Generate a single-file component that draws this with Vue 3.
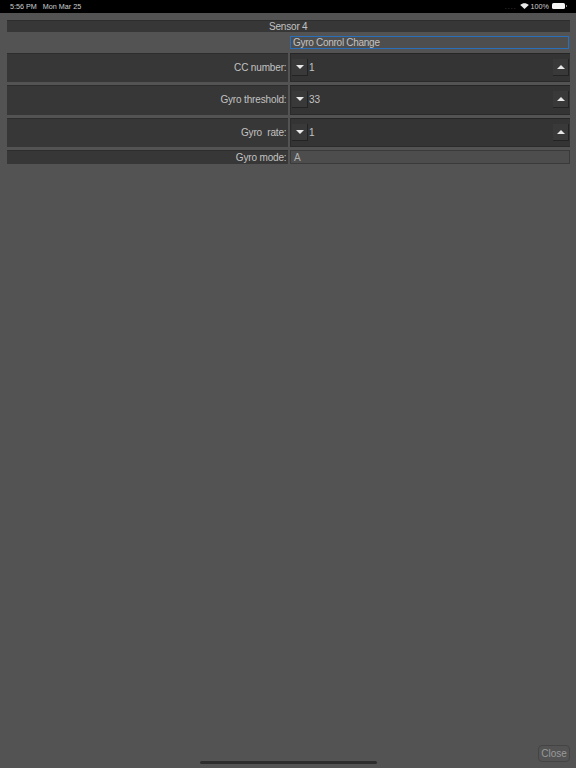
<template>
  <div class="screen">
    <div class="status-bar">
      <span class="clock">5:56 PM</span>
      <span class="date">Mon Mar 25</span>
      <span class="status-right">
        <span class="signal">....</span>
        <svg class="wifi" width="9" height="6" viewBox="0 0 10 7">
          <path d="M5 7 L0 2.4 C3 -0.6 7 -0.6 10 2.4 Z" fill="#e8e8e8" />
        </svg>
        <span class="battery-text">100%</span>
        <span class="battery"></span>
        <span class="battery-tip"></span>
      </span>
    </div>

    <div class="panel">
      <div class="title">Sensor 4</div>

      <div class="name-row">
        <div class="spacer"></div>
        <div class="name-input">Gyro Conrol Change</div>
      </div>

      <div v-for="row in rows" :key="row.label" class="row">
        <div class="label">{{ row.label }}</div>
        <div class="stepper">
          <div class="step-btn down"><span class="arrow-down"></span></div>
          <div class="value">{{ row.value }}</div>
          <div class="step-btn up"><span class="arrow-up"></span></div>
        </div>
      </div>

      <div class="mode-row">
        <div class="label">Gyro mode:</div>
        <div class="mode-value">A</div>
      </div>
    </div>

    <div class="footer">
      <div class="close-btn">Close</div>
    </div>
    <div class="home-bar"></div>
  </div>
</template>

<script setup>
const rows = [
  { label: 'CC number:', value: '1' },
  { label: 'Gyro threshold:', value: '33' },
  { label: 'Gyro\u00a0 rate:', value: '1' }
]
</script>

<style>
html,
body {
  margin: 0;
  background: #535353;
}
</style>

<style scoped>
.screen {
  position: relative;
  display: flex;
  flex-direction: column;
  width: 576px;
  height: 768px;
  overflow: hidden;
  background: #535353;
  font-family: "Liberation Sans", Arial, sans-serif;
  color: #c2c2c2;
}

.status-bar {
  display: flex;
  align-items: center;
  flex: 0 0 13.33px;
  padding: 0 9px 1px 10px;
  box-sizing: border-box;
  background: #000;
  color: #d0d0d0;
  font-family: "Liberation Sans", sans-serif;
  font-size: 7.2px;
}

.date {
  margin-left: 6px;
}

.status-right {
  display: flex;
  align-items: center;
  margin-left: auto;
}

.signal {
  margin-right: 3px;
  color: #555;
  font-size: 7px;
  letter-spacing: 1px;
  line-height: 7px;
}

.wifi {
  margin-right: 2px;
}

.battery {
  display: block;
  width: 13px;
  height: 6px;
  margin-left: 3px;
  border-radius: 1.5px;
  background: #f4f4f4;
}

.battery-tip {
  width: 1px;
  height: 2px;
  margin-left: 1px;
  background: #888;
}

.panel {
  display: flex;
  flex-direction: column;
  padding: 6.67px 6px 0 6.5px;
}

.title {
  box-sizing: border-box;
  height: 12.33px;
  margin-bottom: 3.67px;
  border-top: 1px solid #2d2d2d;
  background: #373737;
  font-size: 10px;
  letter-spacing: -0.2px;
  line-height: 11px;
  text-align: center;
}

.name-row,
.row,
.mode-row {
  display: flex;
  gap: 2.5px;
}

.name-row {
  margin-bottom: 3.67px;
}

.spacer,
.label {
  flex: 0 0 281px;
}

.name-input {
  flex: 1;
  box-sizing: border-box;
  height: 13.33px;
  margin-right: 1px;
  padding-left: 2px;
  border: 1px solid #2a6fba;
  background: #4e4e4e;
  font-size: 10px;
  letter-spacing: -0.28px;
  line-height: 12px;
}

.row {
  height: 29.33px;
  margin-bottom: 3px;
}

.row .label,
.mode-row .label {
  box-sizing: border-box;
  padding-right: 1px;
  background: #373737;
  border-top: 1px solid #2d2d2d;
  font-size: 10px;
  letter-spacing: -0.15px;
  text-align: right;
}

.row .label {
  line-height: 27px;
}

.stepper {
  display: flex;
  flex: 1;
  align-items: center;
  box-sizing: border-box;
  padding: 0 1px 0 1px;
  border-top: 1px solid #262626;
  border-left: 1px solid #2a2a2a;
  border-bottom: 1px solid #2a2a2a;
  background: #343434;
}

.value {
  flex: 1;
  padding-left: 1px;
  font-size: 10px;
}

.step-btn {
  display: flex;
  align-items: center;
  justify-content: center;
  width: 16px;
  height: 17px;
  background: #393939;
  border-right: 1px solid #232323;
  border-bottom: 1px solid #232323;
  box-sizing: border-box;
}

.arrow-down,
.arrow-up {
  display: block;
  width: 0;
  height: 0;
  border-left: 4px solid transparent;
  border-right: 4px solid transparent;
}

.arrow-down {
  border-top: 4px solid #e8e8e8;
}

.arrow-up {
  border-bottom: 4px solid #e8e8e8;
}

.mode-row {
  height: 14px;
}

.mode-row .label {
  line-height: 13px;
}

.mode-value {
  flex: 1;
  box-sizing: border-box;
  padding-left: 3px;
  border: 1px solid #3a3a3a;
  background: #4d4d4d;
  color: #b0b0b0;
  font-size: 10px;
  line-height: 13px;
}

.footer {
  display: flex;
  justify-content: flex-end;
  margin-top: auto;
  padding: 0 6px 6px 0;
}

.close-btn {
  width: 32px;
  height: 17px;
  box-sizing: border-box;
  border: 1px solid #444;
  border-radius: 4px;
  color: #9a9a9a;
  font-size: 10px;
  line-height: 15px;
  text-align: center;
}

.home-bar {
  position: absolute;
  left: 200px;
  bottom: 4px;
  width: 177px;
  height: 3px;
  border-radius: 2px;
  background: #2d2d2d;
}
</style>
